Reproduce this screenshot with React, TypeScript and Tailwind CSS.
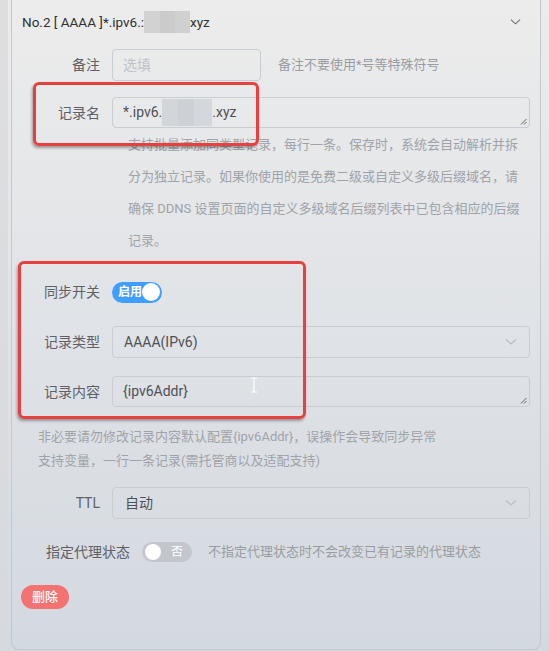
import React from "react";

const font = { fontFamily: 'Roboto, "Noto Sans CJK SC", sans-serif' };

function Chevron({ className }: { className?: string }) {
  return (
    <svg className={className} width="12" height="8" viewBox="0 0 12 8" fill="none">
      <path d="M1 1.5 L6 6 L11 1.5" stroke="currentColor" strokeWidth="1.1" />
    </svg>
  );
}

function Blur({ h, widths }: { h: string; widths: { w: string; c: string }[] }) {
  return (
    <span className={`inline-flex align-middle ${h}`}>
      {widths.map((b, i) => (
        <span key={i} className={`${b.w} ${b.c} h-full`} />
      ))}
    </span>
  );
}

function Label({ children }: { children: React.ReactNode }) {
  return (
    <div className="w-[100px] shrink-0 text-right pr-[12px] text-[14px] text-[#5f6166] leading-[32px]">
      {children}
    </div>
  );
}

function ResizeHandle() {
  return (
    <svg className="absolute right-[2px] bottom-[2px]" width="7" height="7" viewBox="0 0 7 7">
      <path d="M6.5 1 L1 6.5 M6.5 4 L4 6.5" stroke="#555" strokeWidth="0.9" />
    </svg>
  );
}

export default function App() {
  return (
    <div
      className="w-[549px] h-[651px] overflow-hidden flex bg-gradient-to-b from-[#ececec] via-[#e0e3e7] to-[#d3d9e0]"
      style={font}
    >
      <div className="w-[8px] shrink-0 bg-[#d8d9db]/70" />
      <div className="w-[3px] shrink-0" />
      <div className="relative flex-1 mr-[8px] h-[650px] border-x-[1.5px] border-b-[1.5px] border-[#c4c8ce] rounded-b-[8px] pr-[10px]">
        {/* header */}
        <div className="h-[44px] flex items-center pl-[10px] pr-[2px] text-[13.5px] text-[#303133]">
          <span>No.2 [ AAAA ]*.ipv6.:</span>
          <Blur
            h="h-[22px]"
            widths={[
              { w: "w-[16px]", c: "bg-[#d2d2d2]" },
              { w: "w-[15px]", c: "bg-[#cbcbcb]" },
              { w: "w-[15px]", c: "bg-[#d0d0d0]" },
            ]}
          />
          <span>xyz</span>
          <Chevron className="ml-auto mr-[7px] text-[#6a6c70] w-[11px]" />
        </div>

        {/* 备注 */}
        <div className="flex items-center mt-[5px] h-[32px]">
          <Label>备注</Label>
          <div className="w-[149px] h-[32px] border border-[#c9ccd2] rounded-[4px] flex items-center pl-[10px] text-[14px] text-[#bfc2c8]">
            选填
          </div>
          <div className="ml-[17px] text-[13px] text-[#9a9ca1]">备注不要使用*号等特殊符号</div>
        </div>

        {/* 记录名 */}
        <div className="flex mt-[16px]">
          <Label>记录名</Label>
          <div className="relative flex-1 h-[31px] border border-[#c9ccd2] rounded-[4px] flex items-center pl-[10px] text-[14px] text-[#4f5155]">
            <span>*.ipv6.</span>
            <Blur
              h="h-[27px]"
              widths={[
                { w: "w-[16px]", c: "bg-[#d2d5da]" },
                { w: "w-[16px]", c: "bg-[#cdd0d5]" },
                { w: "w-[18px]", c: "bg-[#d4d7db]" },
              ]}
            />
            <span>.xyz</span>
            <ResizeHandle />
          </div>
        </div>
        <div className="ml-[116px] text-[13px] leading-[32px] text-[#a0a3a8] whitespace-nowrap">
          <div>支持批量添加同类型记录，每行一条。保存时，系统会自动解析并拆</div>
          <div>分为独立记录。如果你使用的是免费二级或自定义多级后缀域名，请</div>
          <div>确保 DDNS 设置页面的自定义多级域名后缀列表中已包含相应的后缀</div>
          <div>记录。</div>
        </div>

        {/* 同步开关 */}
        <div className="flex items-center mt-[19px] h-[32px]">
          <Label>同步开关</Label>
          <div className="w-[50px] h-[21px] rounded-full bg-[#409eff] flex items-center pl-[6px] pr-[2px]">
            <span className="text-[12px] font-bold text-white leading-none">启用</span>
            <span className="ml-auto w-[18px] h-[18px] rounded-full bg-white" />
          </div>
        </div>

        {/* 记录类型 */}
        <div className="flex mt-[18px]">
          <Label>记录类型</Label>
          <div className="flex-1 h-[32px] border border-[#c9ccd2] rounded-[4px] flex items-center pl-[11px] pr-[12px] text-[14px] text-[#4f5155]">
            <span>AAAA(IPv6)</span>
            <Chevron className="ml-auto text-[#b8bcc3]" />
          </div>
        </div>

        {/* 记录内容 */}
        <div className="flex mt-[18px]">
          <Label>记录内容</Label>
          <div className="relative flex-1 h-[31px] border border-[#c9ccd2] rounded-[4px] flex items-center pl-[10px] text-[14px] text-[#4f5155]">
            <span>{"{ipv6Addr}"}</span>
            <ResizeHandle />
          </div>
        </div>
        <div className="ml-[26px] mt-[17px] text-[13px] leading-[24px] text-[#a0a3a8] whitespace-nowrap">
          <div>非必要请勿修改记录内容默认配置{"{ipv6Addr}"}，误操作会导致同步异常</div>
          <div>支持变量，一行一条记录(需托管商以及适配支持)</div>
        </div>

        {/* TTL */}
        <div className="flex mt-[14px]">
          <Label>TTL</Label>
          <div className="flex-1 h-[32px] border border-[#c9ccd2] rounded-[4px] flex items-center pl-[12px] pr-[12px] text-[14px] text-[#4f5155]">
            <span>自动</span>
            <Chevron className="ml-auto text-[#b8bcc3]" />
          </div>
        </div>

        {/* 指定代理状态 */}
        <div className="flex items-center mt-[17px] h-[32px] pl-[34px]">
          <div className="text-[14px] text-[#5f6166]">指定代理状态</div>
          <div className="ml-[12px] w-[50px] h-[20px] rounded-full bg-[#c3c6cc] flex items-center pl-[3px] pr-[9px]">
            <span className="w-[16px] h-[16px] rounded-full bg-white" />
            <span className="ml-auto text-[12px] text-white leading-none">否</span>
          </div>
          <div className="ml-[16px] text-[13px] text-[#9a9ca1]">不指定代理状态时不会改变已有记录的代理状态</div>
        </div>

        {/* 删除 */}
        <div className="mt-[16px] pl-[9px]">
          <button className="h-[24px] px-[11px] rounded-full bg-[#f47272] text-white text-[13px] font-medium leading-none">
            删除
          </button>
        </div>

        {/* annotations */}
        <div className="absolute left-[21px] top-[82px] w-[226px] h-[64px] border-[3px] border-[#e8403f] rounded-[6px] shadow-[-1px_2px_3px_rgba(0,0,0,0.35)]" />
        <div className="absolute left-[6px] top-[261px] w-[288px] h-[158px] border-[3px] border-[#e8403f] rounded-[6px] shadow-[-1px_2px_3px_rgba(0,0,0,0.35)]" />

        {/* mouse cursor */}
        <svg className="absolute left-[238px] top-[377px]" width="8" height="16" viewBox="0 0 8 16">
          <path d="M1 1 H7 M4 1 V15 M1 15 H7" stroke="#ffffff" strokeWidth="1.2" fill="none" />
        </svg>
      </div>
    </div>
  );
}
